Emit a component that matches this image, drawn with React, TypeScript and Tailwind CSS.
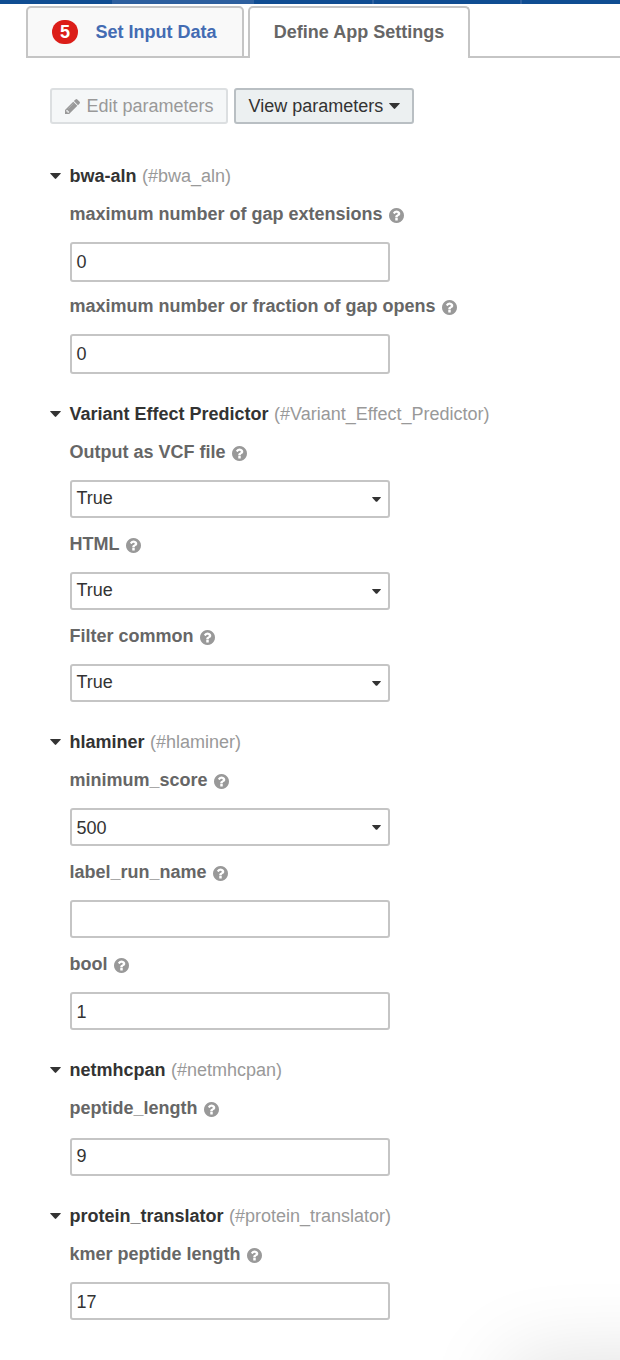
import React from "react";

type FieldData = {
  label: string;
  value: string;
  kind?: "select" | "input";
  box: string;
  text: string;
};

type SectionData = {
  name: string;
  id: string;
  space: string;
  fields: FieldData[];
};

const sections: SectionData[] = [
  {
    name: "bwa-aln",
    id: "(#bwa_aln)",
    space: "mt-10",
    fields: [
      { label: "maximum number of gap extensions", value: "0", box: "h-10", text: "pb-0" },
      { label: "maximum number or fraction of gap opens", value: "0", box: "h-10", text: "pb-0" },
    ],
  },
  {
    name: "Variant Effect Predictor",
    id: "(#Variant_Effect_Predictor)",
    space: "mt-4",
    fields: [
      { label: "Output as VCF file", value: "True", kind: "select", box: "h-[38px]", text: "pb-0.5" },
      { label: "HTML", value: "True", kind: "select", box: "h-[38px]", text: "pb-0.5" },
      { label: "Filter common", value: "True", kind: "select", box: "h-[38px]", text: "pb-0.5" },
    ],
  },
  {
    name: "hlaminer",
    id: "(#hlaminer)",
    space: "mt-3.5",
    fields: [
      { label: "minimum_score", value: "500", kind: "select", box: "h-[38px]", text: "pt-0.5" },
      { label: "label_run_name", value: "", box: "h-[38px]", text: "pt-0.5" },
      { label: "bool", value: "1", box: "h-[38px]", text: "pt-0.5" },
    ],
  },
  {
    name: "netmhcpan",
    id: "(#netmhcpan)",
    space: "mt-3.5",
    fields: [{ label: "peptide_length", value: "9", box: "mt-0.5 h-[38px]", text: "pb-0.5" }],
  },
  {
    name: "protein_translator",
    id: "(#protein_translator)",
    space: "mt-4",
    fields: [{ label: "kmer peptide length", value: "17", box: "h-[38px]", text: "pt-0.5" }],
  },
];

function Caret({ className }: { className: string }) {
  return (
    <svg viewBox="0 0 11 6" className={className} fill="#333" aria-hidden="true">
      <path d="M0.6 0H10.4Q11.2 0 10.6 0.8L6.2 5.6Q5.5 6.2 4.8 5.6L0.4 0.8Q-0.2 0 0.6 0Z" />
    </svg>
  );
}

function Help() {
  return (
    <svg viewBox="0 0 1536 1536" className="mt-[3px] size-[15px] shrink-0" fill="#999" aria-hidden="true">
      <path d="M896 1248v-192q0-14-9-23t-23-9H672q-14 0-23 9t-9 23v192q0 14 9 23t23 9h192q14 0 23-9t9-23zm256-672q0-88-55.500-163T958 297t-170-41q-243 0-371 213-15 24 8 42l132 100q7 6 19 6 16 0 25-12 53-68 86-92 34-24 86-24 48 0 85.500 26t37.500 59q0 38-20 61t-68 45q-63 28-115.500 86.500T640 892v36q0 14 9 23t23 9h192q14 0 23-9t9-23q0-19 21.500-49.500T972 829q32-18 49-28.500t46-35 44.500-48 28-60.500 12.500-81zm384 192q0 209-103 385.500T1153.500 1433 768 1536t-385.500-103T103 1153.500 0 768t103-385.500T382.500 103 768 0t385.500 103T1433 382.500 1536 768z" />
    </svg>
  );
}

function Pencil() {
  return (
    <svg viewBox="0 0 1515 1515" className="size-[15px] shrink-0" fill="#999" aria-hidden="true">
      <path d="M363 1387l70-70-235-235-70 70v107h128v128h107zM832 267l416 416-832 832H0v-416zm683 96q0 53-37 90l-166 166-416-416 166-165q36-38 90-38 53 0 91 38l235 234q37 39 37 91z" />
      <path d="M850 450L330 970" stroke="#d2d4d5" strokeWidth="40" />
    </svg>
  );
}

function Field({ field }: { field: FieldData }) {
  return (
    <div className="h-[92px]">
      <div className="-ml-[0.6px] flex h-6 items-center gap-[6.500px] font-bold leading-6 text-[#666]">
        <span>{field.label}</span>
        <Help />
      </div>
      <div className="pt-4">
        <div
          className={`flex w-80 items-center justify-between rounded-[3px] border-2 border-[#c5c5c5] bg-white pl-[4.500px] pr-[7px] ${field.box}`}
        >
          <span className={`leading-6 ${field.text}`}>{field.value}</span>
          {field.kind === "select" && <Caret className="mt-px h-[5px] w-[9px]" />}
        </div>
      </div>
    </div>
  );
}

export default function App() {
  return (
    <div className="relative h-[1360px] w-[620px] overflow-hidden bg-white font-['Liberation_Sans',Arial,sans-serif] text-[18px] text-[#333]">
      <div className="flex h-1 bg-[#104d92]">
        <div className="ml-28 w-[142px] bg-[#2e609f]" />
        <div className="ml-[118px] w-[2px] bg-[#2e609f]" />
        <div className="ml-[146px] w-[2px] bg-[#2e609f]" />
      </div>

      <div className="mt-0.5 flex h-[52px] pl-[26px] font-bold">
        <div className="flex w-[218px] items-center rounded-t-[5px] border-2 border-[#c5c5c5] bg-[#f9f9f9] pl-6">
          <span className="flex h-6 w-[26px] items-center justify-center rounded-full bg-[#dc1e19] text-white">5</span>
          <span className="ml-[17.500px] text-[#446cb3]">Set Input Data</span>
        </div>
        <div className="w-1 border-b-2 border-[#c5c5c5]" />
        <div className="flex w-[222px] items-center justify-center rounded-t-[5px] border-x-2 border-t-2 border-[#c5c5c5] pb-0.5 text-[#666]">
          Define App Settings
        </div>
        <div className="grow border-b-2 border-[#c5c5c5]" />
      </div>

      <div className="flex gap-1.5 pl-[50px] pt-[30px]">
        <div className="flex h-9 w-[178px] items-center gap-[7px] rounded-[3px] border-2 border-[#dcdfe1] bg-[#f5f7f8] pl-[12.500px] text-[#999]">
          <Pencil />
          <span>Edit parameters</span>
        </div>
        <div className="flex h-9 w-[180px] items-center gap-1.5 rounded-[3px] border-2 border-[#b9bfc3] bg-[#ecf0f1] pl-[12.500px]">
          <span>View parameters</span>
          <Caret className="h-[6px] w-[11px]" />
        </div>
      </div>

      {sections.map((section) => (
        <section key={section.name} className={`pl-[50px] ${section.space}`}>
          <div className="flex h-6 items-center leading-6">
            <Caret className="mr-[8.500px] h-[6px] w-[11px]" />
            <b>{section.name}</b>
            <span className="ml-[5.500px] text-[#999]">{section.id}</span>
          </div>
          <div className="pl-5 pt-3.5">
            {section.fields.map((field) => (
              <Field key={field.label} field={field} />
            ))}
          </div>
        </section>
      ))}

      <div className="pointer-events-none absolute left-[516px] top-[1368px] h-[200px] w-[300px] shadow-[0_0_84px_8px_rgba(0,0,0,0.13)]" />
    </div>
  );
}
